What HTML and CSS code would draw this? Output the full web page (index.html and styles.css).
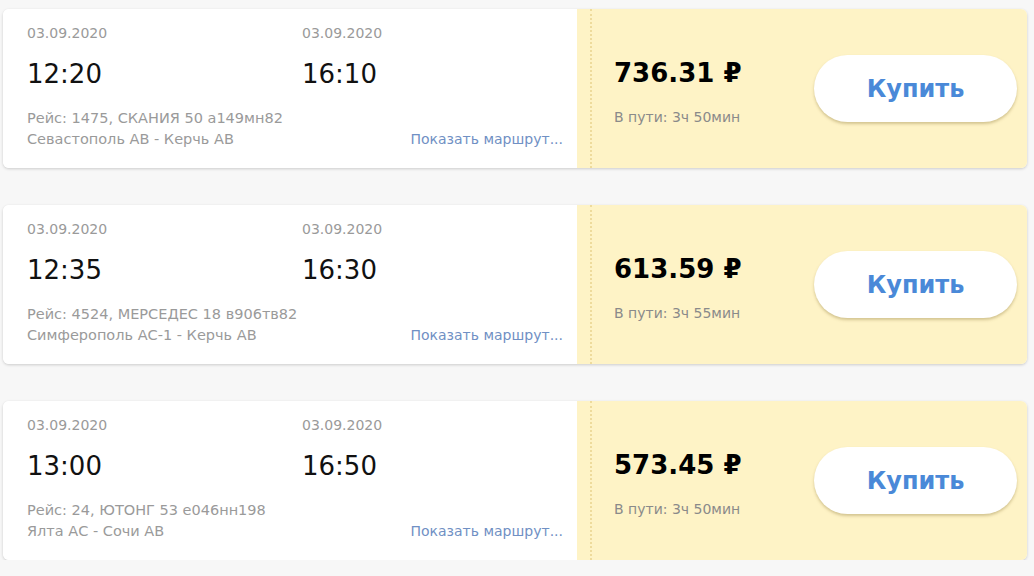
FILE: index.html
```html
<!DOCTYPE html>
<html lang="ru">
<head>
<meta charset="utf-8">
<link rel="stylesheet" href="styles.css">
</head>
<body>
<div class="list">
  <div class="card">
    <div class="info">
      <div class="row dates"><span class="col">03.09.2020</span><span class="col">03.09.2020</span></div>
      <div class="row times"><span class="col">12:20</span><span class="col">16:10</span></div>
      <div class="meta">Рейс: 1475, СКАНИЯ 50 а149мн82</div>
      <div class="meta last"><span>Севастополь АВ - Керчь АВ</span><a class="route">Показать маршрут...</a></div>
    </div>
    <div class="buy">
      <div class="price-box">
        <div class="price">736.31 ₽</div>
        <div class="dur">В пути: 3ч 50мин</div>
      </div>
      <button class="btn">Купить</button>
    </div>
  </div>
  <div class="card">
    <div class="info">
      <div class="row dates"><span class="col">03.09.2020</span><span class="col">03.09.2020</span></div>
      <div class="row times"><span class="col">12:35</span><span class="col">16:30</span></div>
      <div class="meta">Рейс: 4524, МЕРСЕДЕС 18 в906тв82</div>
      <div class="meta last"><span>Симферополь АС-1 - Керчь АВ</span><a class="route">Показать маршрут...</a></div>
    </div>
    <div class="buy">
      <div class="price-box">
        <div class="price">613.59 ₽</div>
        <div class="dur">В пути: 3ч 55мин</div>
      </div>
      <button class="btn">Купить</button>
    </div>
  </div>
  <div class="card">
    <div class="info">
      <div class="row dates"><span class="col">03.09.2020</span><span class="col">03.09.2020</span></div>
      <div class="row times"><span class="col">13:00</span><span class="col">16:50</span></div>
      <div class="meta">Рейс: 24, ЮТОНГ 53 е046нн198</div>
      <div class="meta last"><span>Ялта АС - Сочи АВ</span><a class="route">Показать маршрут...</a></div>
    </div>
    <div class="buy">
      <div class="price-box">
        <div class="price">573.45 ₽</div>
        <div class="dur">В пути: 3ч 50мин</div>
      </div>
      <button class="btn">Купить</button>
    </div>
  </div>
</div>
</body>
</html>
```
FILE: styles.css
```css
html, body {
  margin: 0;
  padding: 0;
  background: #f7f7f7;
  font-family: "DejaVu Sans", "Noto Sans", sans-serif;
}
.list {
  display: flex;
  flex-direction: column;
  gap: 37px;
  padding: 9px 7px 0 3px;
}
.card {
  display: flex;
  height: 159px;
  border-radius: 6px;
  overflow: hidden;
  box-shadow: 0 1px 3px rgba(0,0,0,0.18);
  background: #fff;
}
.info {
  width: 574px;
  flex: none;
  box-sizing: border-box;
  padding: 16px 14px 0 24px;
  background: #fff;
  display: flex;
  flex-direction: column;
}
.row {
  display: flex;
}
.col {
  flex: none;
  width: 275px;
}
.col + .col {
  width: auto;
}
.dates {
  font-size: 14px;
  line-height: 17px;
  color: #9a9a9a;
}
.times {
  margin-top: 16px;
  font-size: 26px;
  line-height: 32px;
  color: #111;
}
.meta {
  font-size: 14.5px;
  line-height: 21px;
  color: #9a9a9a;
}
.times + .meta {
  margin-top: 18px;
}
.last {
  display: flex;
  justify-content: space-between;
}
.route {
  font-size: 14px;
  color: #7090c4;
}
.buy {
  flex: 1;
  background: #fef3c6;
  display: flex;
  align-items: center;
  justify-content: space-between;
  padding: 0 10px 0 37px;
  position: relative;
}
.buy::before {
  content: "";
  position: absolute;
  left: 13px;
  top: 0;
  bottom: 0;
  border-left: 2px dotted #eedb9c;
}
.price-box {
  align-self: flex-start;
  padding-top: 48px;
}
.price {
  font-size: 26px;
  line-height: 32px;
  font-weight: 700;
  color: #000;
}
.dur {
  margin-top: 20px;
  font-size: 14px;
  line-height: 17px;
  color: #8a8a8a;
}
.btn {
  width: 203px;
  height: 67px;
  border: none;
  border-radius: 34px;
  background: #fff;
  box-shadow: 0 2px 3px rgba(160,140,80,0.45);
  font-family: inherit;
  font-size: 24px;
  font-weight: 700;
  color: #4a89d8;
}
```
